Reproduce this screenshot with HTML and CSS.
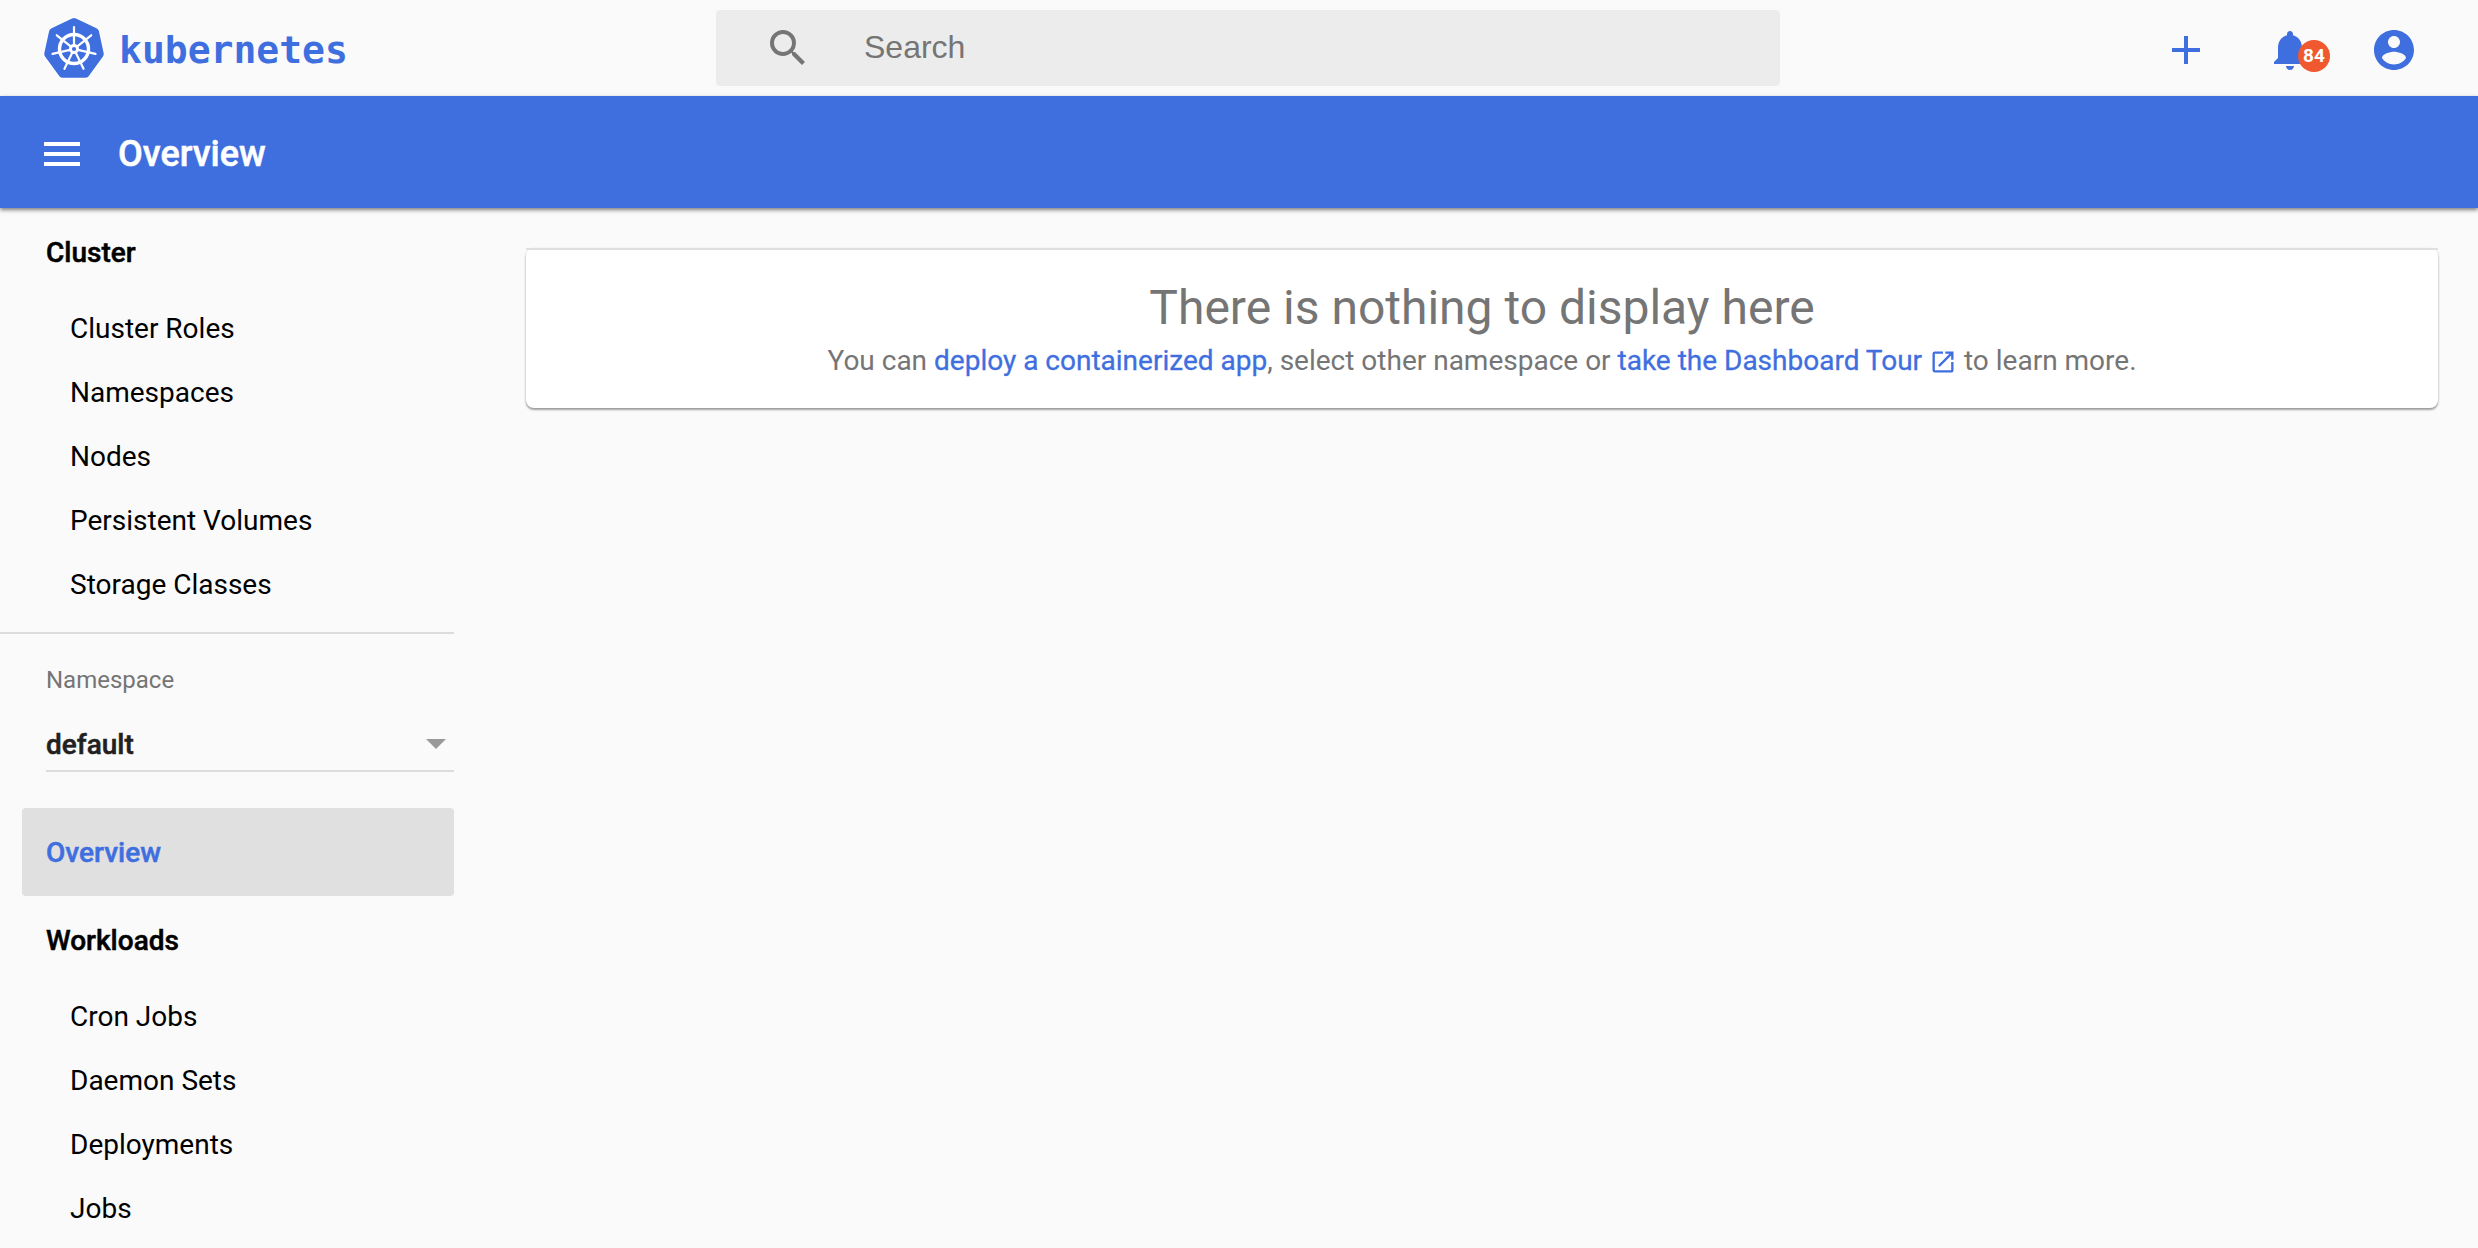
FILE: index.html
```html
<!DOCTYPE html>
<html lang="en">
<head>
<meta charset="utf-8">
<title>Kubernetes Dashboard</title>
<link rel="stylesheet" href="styles.css">
</head>
<body>
<header class="topbar">
  <a class="brand">
    <svg class="brand-logo" viewBox="-33 -33 66 66">
      <path class="brand-shape" d="M-2-29.6Q0-30.6 2-29.6L22.5-19.8Q24.4-18.9 24.9-17L29.7 5.2Q30.1 7 28.8 8.7L14.6 28.2Q13.3 29.8 11.2 29.8H-11.2Q-13.3 29.8-14.6 28.2L-28.8 8.7Q-30.1 7-29.7 5.2L-24.9-17Q-24.4-18.9-22.5-19.8Z"/>
      <g transform="translate(0 1)">
        <circle class="wheel" r="14.5"/>
        <g class="spokes">
          <path d="M0-3V-22"/><path d="M0-3V-22" transform="rotate(51.43)"/><path d="M0-3V-22" transform="rotate(102.86)"/><path d="M0-3V-22" transform="rotate(154.29)"/><path d="M0-3V-22" transform="rotate(205.71)"/><path d="M0-3V-22" transform="rotate(257.14)"/><path d="M0-3V-22" transform="rotate(308.57)"/>
        </g>
        <circle class="hub" r="3.6"/>
      </g>
    </svg>
    <span class="brand-name">kubernetes</span>
  </a>
  <div class="search">
    <svg class="icon" viewBox="0 0 24 24"><path d="M15.5 14h-.79l-.28-.27A6.471 6.471 0 0 0 16 9.5 6.5 6.5 0 1 0 9.5 16c1.61 0 3.09-.59 4.23-1.57l.27.28v.79l5 4.99L20.49 19l-4.99-5zm-6 0C7.01 14 5 11.99 5 9.5S7.01 5 9.5 5 14 7.01 14 9.5 11.99 14 9.5 14z"/></svg>
    <span class="search-text">Search</span>
  </div>
  <div class="actions">
    <svg class="icon" viewBox="0 0 24 24"><path d="M19 13h-6v6h-2v-6H5v-2h6V5h2v6h6v2z"/></svg>
    <div class="notifications">
      <svg class="icon" viewBox="0 0 24 24"><path d="M12 22c1.1 0 2-.9 2-2h-4c0 1.1.9 2 2 2zm6-6v-5c0-3.07-1.64-5.64-4.5-6.32V4c0-.83-.67-1.5-1.5-1.5s-1.5.67-1.5 1.5v.68C7.63 5.36 6 7.92 6 11v5l-2 2v1h16v-1l-2-2z"/></svg>
      <span class="badge">84</span>
    </div>
    <svg class="icon" viewBox="0 0 24 24"><path d="M12 2C6.48 2 2 6.48 2 12s4.48 10 10 10 10-4.480 10-10S17.52 2 12 2zm0 3c1.66 0 3 1.34 3 3s-1.34 3-3 3-3-1.34-3-3 1.34-3 3-3zm0 14.2c-2.500 0-4.710-1.280-6-3.220.03-1.990 4-3.080 6-3.080 1.990 0 5.970 1.090 6 3.080-1.290 1.940-3.500 3.220-6 3.220z"/></svg>
  </div>
</header>
<div class="titlebar">
  <svg class="icon" viewBox="0 0 24 24"><path d="M3 18h18v-2H3v2zm0-5h18v-2H3v2zm0-7v2h18V6H3z"/></svg>
  <h1 class="title">Overview</h1>
</div>
<div class="layout">
  <nav class="sidebar">
    <a class="group">Cluster</a>
    <a class="item">Cluster Roles</a>
    <a class="item">Namespaces</a>
    <a class="item">Nodes</a>
    <a class="item">Persistent Volumes</a>
    <a class="item">Storage Classes</a>
    <div class="namespace">
      <div class="namespace-label">Namespace</div>
      <div class="select"><span>default</span><svg class="caret" viewBox="0 0 20 10"><path d="M0 0h20L10 10z"/></svg></div>
    </div>
    <a class="selected">Overview</a>
    <a class="group group-workloads">Workloads</a>
    <a class="item">Cron Jobs</a>
    <a class="item">Daemon Sets</a>
    <a class="item">Deployments</a>
    <a class="item">Jobs</a>
  </nav>
  <main class="content">
    <section class="card">
      <h2 class="card-title">There is nothing to display here</h2>
      <p class="card-text">You can <a class="link">deploy a containerized app</a>, select other namespace or <a class="link">take the Dashboard Tour <svg class="external" viewBox="0 0 24 24"><path d="M19 19H5V5h7V3H5a2 2 0 0 0-2 2v14a2 2 0 0 0 2 2h14c1.100 0 2-.9 2-2v-7h-2v7zM14 3v2h3.590l-9.830 9.830 1.410 1.410L19 6.410V10h2V3h-7z"/></svg></a> to learn more.</p>
    </section>
  </main>
</div>
</body>
</html>
```
FILE: styles.css
```css
* { box-sizing: border-box; }
body {
  margin: 0;
  height: 1248px;
  overflow: hidden;
  background: #fafafa;
  color: #000;
  font-family: Roboto, sans-serif;
  font-size: 28px;
}
.icon { display: block; width: 48px; height: 48px; fill: currentColor; }

.topbar {
  display: grid;
  grid-template-columns: 716px 1064px 1fr;
  height: 96px;
}
.brand { display: flex; padding: 15px 0 0 41px; color: #3f6fdf; }
.brand-logo { width: 66px; height: 66px; }
.brand-shape { fill: #3f6fdf; stroke: #fff; stroke-width: 2; paint-order: stroke; }
.wheel { fill: none; stroke: #fff; stroke-width: 3.4; }
.spokes { stroke: #fff; stroke-width: 2.2; stroke-linecap: round; }
.hub { fill: #3f6fdf; stroke: #fff; stroke-width: 3; }
.brand-name {
  margin-left: 12px;
  font: bold 38px/70px "DejaVu Sans Mono", monospace;
}
.search {
  display: flex;
  height: 76px;
  margin-top: 10px;
  padding: 14px 48px;
  border-radius: 4px;
  background: #ececec;
  color: #757575;
}
.search-text { margin-left: 52px; font: 32px/46px "Liberation Sans", sans-serif; }
.actions {
  display: flex;
  justify-content: flex-end;
  gap: 56px;
  padding: 26px 60px 0 0;
  color: #3f6fdf;
}
.notifications { position: relative; }
.badge {
  position: absolute;
  left: 32px;
  top: 14px;
  width: 32px;
  height: 32px;
  border-radius: 50%;
  background: #f05830;
  color: #fff;
  font-weight: 700;
  font-size: 19px;
  line-height: 32px;
  text-align: center;
}
.titlebar {
  position: relative;
  display: flex;
  align-items: center;
  height: 112px;
  padding: 4px 38px 0;
  background: #3f6fdf;
  color: #fff;
  box-shadow: 0 2px 4px rgba(0, 0, 0, .5);
}
.title { margin: 0 0 0 32px; font-size: 36px; font-weight: 500; }
.title, .group, .selected, .select { -webkit-text-stroke: .5px currentColor; }

.layout { display: grid; grid-template-columns: 454px 1fr; }
.sidebar { padding-top: 13px; }
.sidebar a { display: block; }
.group { height: 76px; padding-left: 46px; font-weight: 500; line-height: 64px; }
.item { height: 64px; padding-left: 70px; line-height: 64px; }
.namespace {
  height: 140px;
  margin-top: 15px;
  padding-left: 46px;
  border-top: 2px solid #dcdcdc;
}
.namespace-label { height: 76px; color: #757575; font-size: 24px; line-height: 92px; }
.select {
  display: flex;
  align-items: center;
  justify-content: space-between;
  height: 62px;
  padding: 8px 8px 0 0;
  border-bottom: 2px solid #dcdcdc;
  color: #212121;
  font-weight: 500;
}
.caret { width: 20px; height: 10px; fill: #999; }
.sidebar .selected {
  height: 88px;
  margin: 36px 0 0 22px;
  padding-left: 24px;
  border-radius: 4px;
  background: #e0e0e0;
  color: #3f6fdf;
  font-weight: 500;
  line-height: 90px;
}
.group-workloads { margin-top: 13px; }

.content { padding: 40px 40px 0 72px; }
.card {
  position: relative;
  height: 160px;
  padding-top: 31px;
  border-radius: 8px;
  background: #fff;
  box-shadow: 0 2px 2px rgba(0, 0, 0, .3), 0 1px 3px rgba(0, 0, 0, .15);
  color: #757575;
  text-align: center;
}
.card::before {
  content: "";
  position: absolute;
  inset: 0 0 auto;
  height: 2px;
  background: #e0e0e0;
}
.card-title { margin: 0; font-size: 48px; font-weight: 400; line-height: 58px; }
.card-text { margin: 6px 0 0; line-height: 36px; }
.link { color: #3f6fdf; -webkit-text-stroke: .3px currentColor; }
.external { width: 28px; height: 28px; fill: currentColor; vertical-align: -6px; }
```
